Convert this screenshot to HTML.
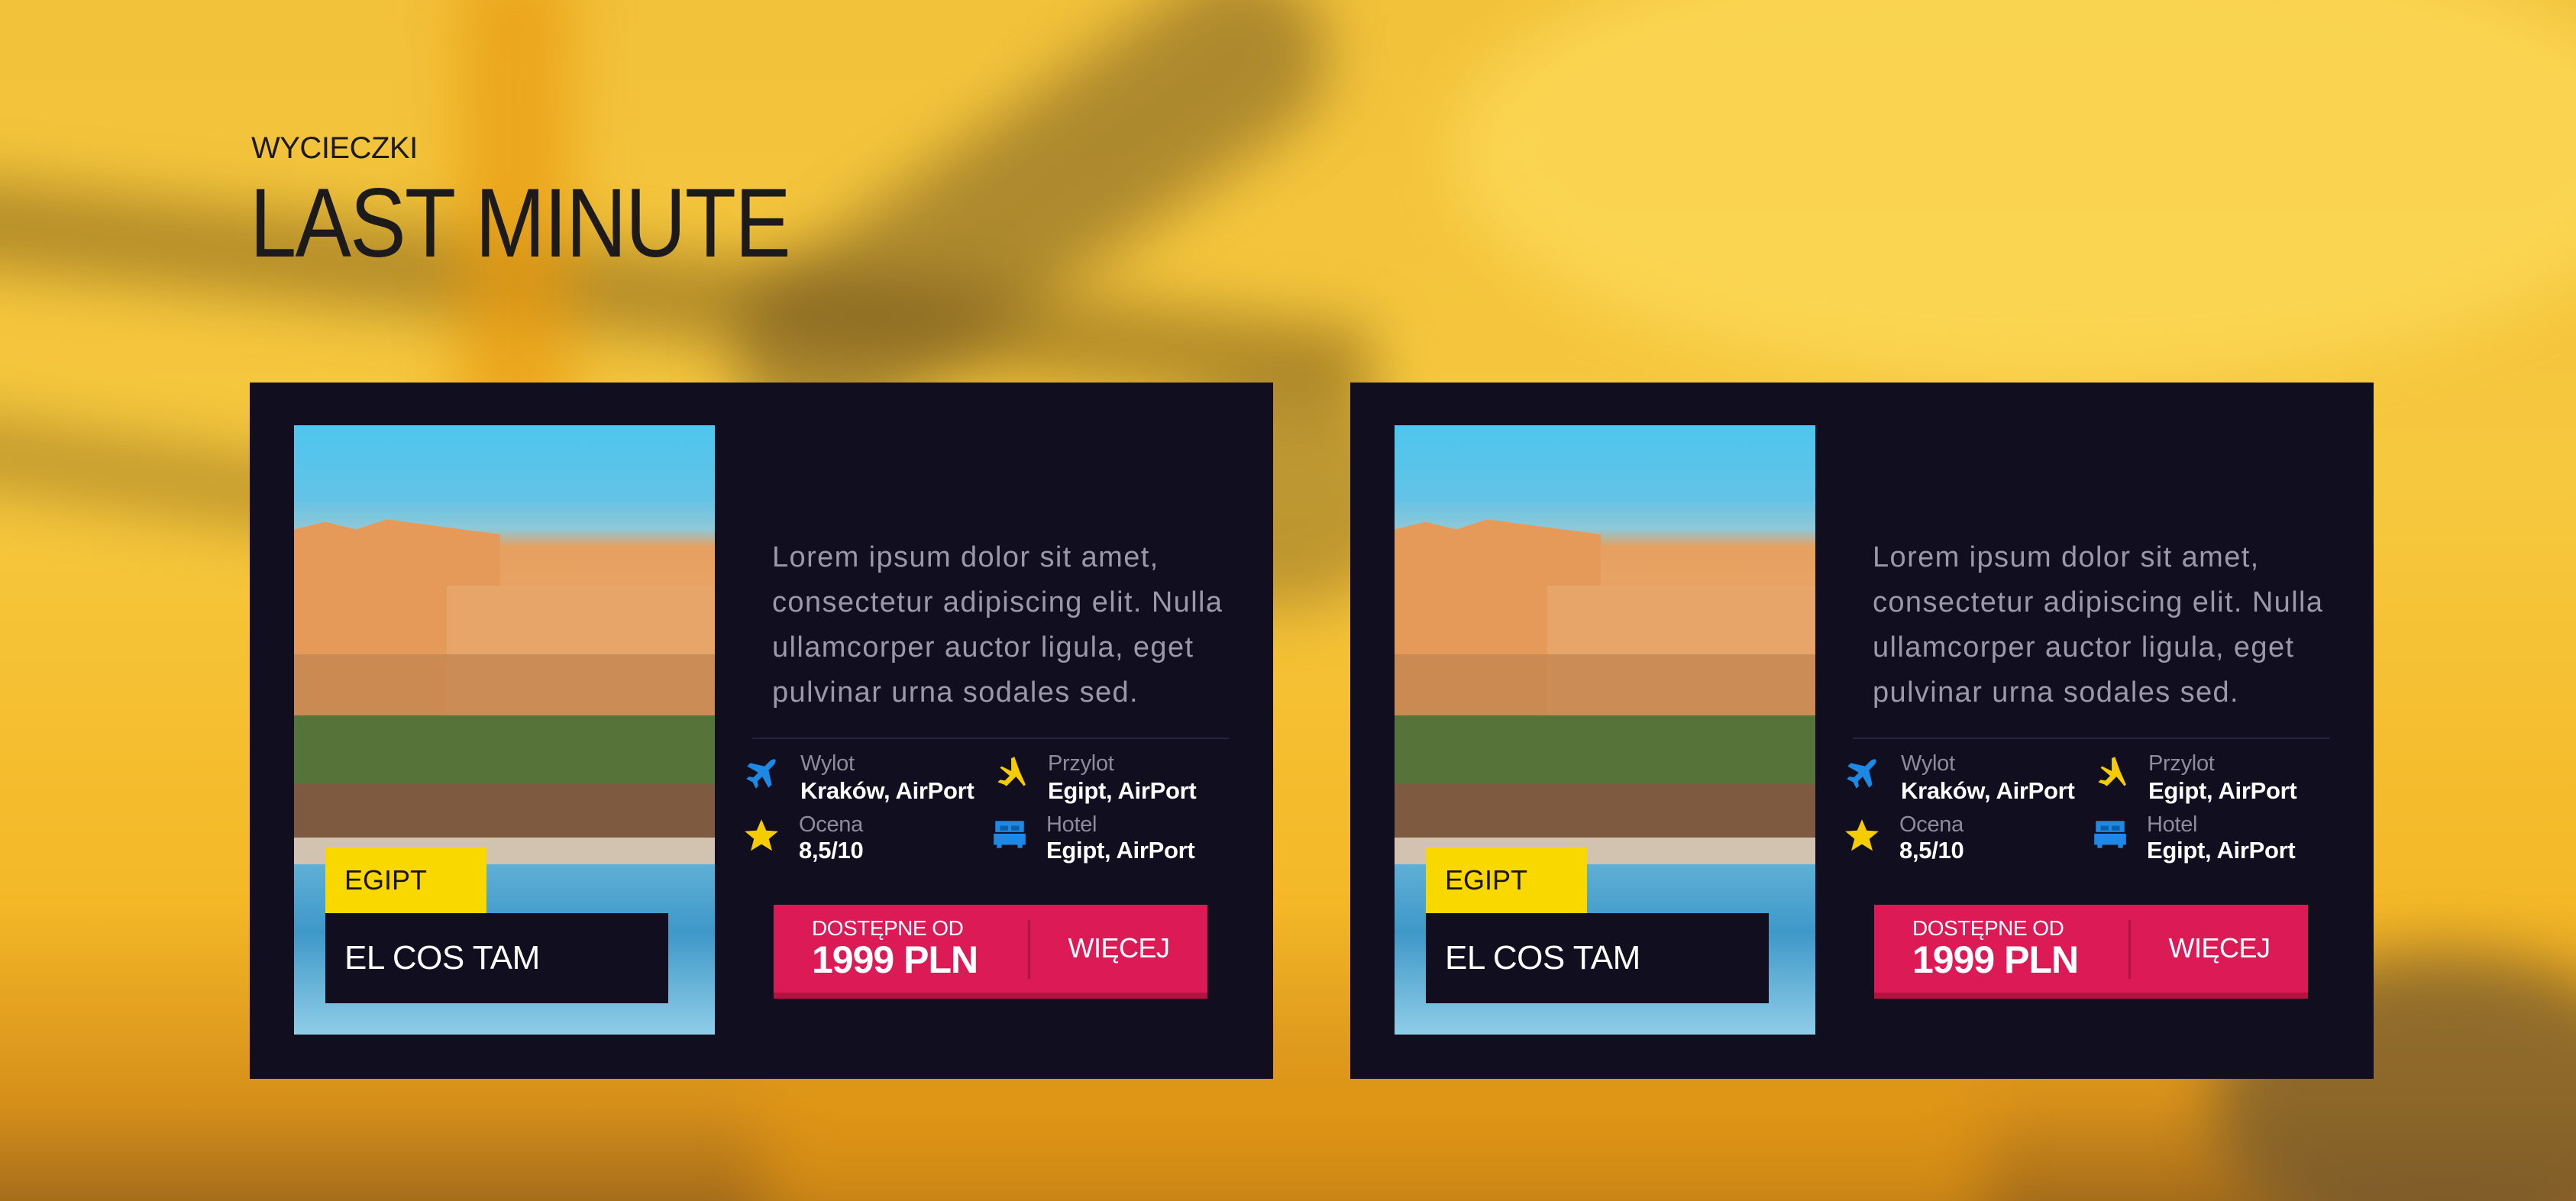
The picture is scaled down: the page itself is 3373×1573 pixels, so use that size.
<!DOCTYPE html>
<html><head><meta charset="utf-8">
<style>
*{margin:0;padding:0;box-sizing:border-box}
body{width:3373px;height:1573px;overflow:hidden;position:relative;font-family:"Liberation Sans",sans-serif;
background:linear-gradient(180deg,#f2c23a 0%,#f6c83e 40%,#f4b827 75%,#d58f1a 92%,#a66d1a 100%);}
.bg{position:absolute;inset:0;overflow:hidden}
.blob{position:absolute;filter:blur(40px)}
.card{position:absolute;top:501px;width:1340px;height:912px;background:#100e1f}
.img{position:absolute;left:58px;top:56px;width:551px;height:798px;overflow:hidden;
background:linear-gradient(180deg,#4ec6ee 0%,#62c3e6 12%,#8fc8d8 17%,#e6a060 20%,#eba66a 35%,#d0884c 45%,#8b7040 52%,#5a7a3c 58%,#8a6a48 63%,#c9b29a 68%,#b8c4c8 72%,#6ab2d2 76%,#58a8cf 85%,#7cc3e2 93%,#92d0ea 100%)}
.img i{position:absolute;display:block}
.tag{position:absolute;left:99px;top:609px;width:211px;height:86px;background:#f9d800;color:#1a1400;font-size:36px;padding-left:25px;line-height:86px}
.name{position:absolute;left:99px;top:695px;width:449px;height:118px;background:#100e1f;color:#fff;font-size:44px;padding-left:25px;line-height:118px;letter-spacing:-0.5px}
.lorem{position:absolute;left:684px;top:200px;width:700px;white-space:nowrap;color:#9b99a8;font-size:38px;line-height:59px;letter-spacing:1.4px}
.div{position:absolute;left:658px;top:465px;width:624px;height:2px;background:#26243a}
.ic{position:absolute;width:50px;height:50px}
.lab{position:absolute;color:#8e8c9a;font-size:29px;line-height:34px;letter-spacing:-0.3px}
.val{position:absolute;color:#fff;font-size:31px;font-weight:bold;line-height:36px;letter-spacing:-0.3px}
.btn{position:absolute;left:686px;top:684px;width:568px;height:123px;background:#dc1a55;border-bottom:8px solid #b5123f}
.btn .sep{position:absolute;left:333px;top:20px;width:3px;height:77px;background:#b01443}
.btn .a{position:absolute;left:50px;top:15px;color:#fff;font-size:28px;letter-spacing:-0.5px}
.btn .b{position:absolute;left:50px;top:43px;color:#fff;font-size:50px;font-weight:bold;letter-spacing:-1px}
.btn .c{position:absolute;left:336px;width:232px;top:36px;text-align:center;color:#fff;font-size:36px;letter-spacing:-0.5px}
</style></head><body>
<div class="bg">
<div class="blob" style="left:-100px;top:330px;width:1900px;height:110px;background:#7a5a18;opacity:.55;transform:rotate(6deg)"></div>
<div class="blob" style="left:-100px;top:600px;width:900px;height:90px;background:#7a5a18;opacity:.45;transform:rotate(8deg)"></div>
<div class="blob" style="left:600px;top:-50px;width:150px;height:700px;background:#e89a10;opacity:.7"></div>
<div class="blob" style="left:900px;top:150px;width:900px;height:230px;background:#6a5020;opacity:.5;transform:rotate(-35deg);border-radius:120px"></div>
<div class="blob" style="left:1500px;top:500px;width:350px;height:300px;background:#6a5020;opacity:.4;border-radius:50%"></div>
<div class="blob" style="left:1900px;top:-100px;width:1600px;height:600px;background:#ffe060;opacity:.6;border-radius:50%"></div>
<div class="blob" style="left:2900px;top:1250px;width:600px;height:400px;background:#6e5630;opacity:.7;border-radius:50%"></div>
<div class="blob" style="left:1000px;top:1420px;width:1600px;height:200px;background:#f0a010;opacity:.5"></div>
</div>

<div style="position:absolute;left:329px;top:172px;font-size:40px;color:#1c1a1a;letter-spacing:-0.5px">WYCIECZKI</div>
<div style="position:absolute;left:327px;top:228px;font-size:128px;color:#1c1a1a;transform:scaleX(0.86);transform-origin:left top;letter-spacing:-2px;line-height:130px">LAST MINUTE</div>

<div class="card" style="left:327px">
 <div class="img">
  <i style="left:0;top:110px;width:270px;height:330px;background:#e59a5a;clip-path:polygon(0 8%,15% 5%,30% 8%,45% 4%,100% 10%,100% 100%,0 100%)"></i>
  <i style="left:200px;top:210px;width:350px;height:200px;background:#e8a56a"></i>
  <i style="left:0;top:300px;width:551px;height:120px;background:#c48650;opacity:.8"></i>
  <i style="left:0;top:380px;width:551px;height:110px;background:#56743a"></i>
  <i style="left:0;top:470px;width:551px;height:80px;background:#7e5a40"></i>
  <i style="left:0;top:540px;width:551px;height:40px;background:#d2c2b0"></i>
  <i style="left:0;top:575px;width:551px;height:223px;background:linear-gradient(180deg,#5fb0d6,#3e98c8 40%,#8fcde8)"></i>
 </div>
 <div class="tag">EGIPT</div>
 <div class="name">EL COS TAM</div>
 <div class="lorem">Lorem ipsum dolor sit amet,<br>consectetur adipiscing elit. Nulla<br>ullamcorper auctor ligula, eget<br>pulvinar urna sodales sed.</div>
 <div class="div"></div>
 <svg class="ic" style="left:645px;top:488px" viewBox="0 0 24 24"><path fill="#1e88e5" d="M21 3c-1-1-3 0-4 1l-3 3-9-2-2 2 7 4-3 3-3-.5-1.5 1.5 4 2 2 4 1.5-1.5-.5-3 3-3 4 7 2-2-2-9 3-3c1-1 2-3 1-4z"/></svg>
 <div class="lab" style="left:721px;top:482px">Wylot</div>
 <div class="val" style="left:721px;top:517px">Kraków, AirPort</div>
 <svg class="ic" style="left:970px;top:488px" viewBox="0 0 24 24"><path fill="#f4cc00" d="M15 1l-2 1v8l-6-3-1 1 6 5-3 3-3-.5-1.5 1.5 4 1.5 1.5 1 6-6 5 6 1-1-4-9z"/></svg>
 <div class="lab" style="left:1045px;top:482px">Przylot</div>
 <div class="val" style="left:1045px;top:517px">Egipt, AirPort</div>
 <svg class="ic" style="left:645px;top:568px" viewBox="0 0 24 24"><path fill="#f4cc00" d="M12 2l3 7 7.5.5-5.8 4.8 2 7.5L12 17.6 5.3 21.8l2-7.5L1.5 9.5 9 9z"/></svg>
 <div class="lab" style="left:719px;top:562px">Ocena</div>
 <div class="val" style="left:719px;top:595px">8,5/10</div>
 <svg class="ic" style="left:970px;top:568px" viewBox="0 0 24 24"><path fill="#1e88e5" d="M3 3h18v7H3zM2 11h20v7h-2v2h-3v-2H7v2H4v-2H2z"/><path fill="#0d5fa8" d="M6 6h5v3H6zM13 6h5v3h-5z"/></svg>
 <div class="lab" style="left:1043px;top:562px">Hotel</div>
 <div class="val" style="left:1043px;top:595px">Egipt, AirPort</div>
 <div class="btn"><div class="sep"></div><div class="a">DOSTĘPNE OD</div><div class="b">1999 PLN</div><div class="c">WIĘCEJ</div></div>
</div>

<div class="card" style="left:1768px">
 <div class="img">
  <i style="left:0;top:110px;width:270px;height:330px;background:#e59a5a;clip-path:polygon(0 8%,15% 5%,30% 8%,45% 4%,100% 10%,100% 100%,0 100%)"></i>
  <i style="left:200px;top:210px;width:350px;height:200px;background:#e8a56a"></i>
  <i style="left:0;top:300px;width:551px;height:120px;background:#c48650;opacity:.8"></i>
  <i style="left:0;top:380px;width:551px;height:110px;background:#56743a"></i>
  <i style="left:0;top:470px;width:551px;height:80px;background:#7e5a40"></i>
  <i style="left:0;top:540px;width:551px;height:40px;background:#d2c2b0"></i>
  <i style="left:0;top:575px;width:551px;height:223px;background:linear-gradient(180deg,#5fb0d6,#3e98c8 40%,#8fcde8)"></i>
 </div>
 <div class="tag">EGIPT</div>
 <div class="name">EL COS TAM</div>
 <div class="lorem">Lorem ipsum dolor sit amet,<br>consectetur adipiscing elit. Nulla<br>ullamcorper auctor ligula, eget<br>pulvinar urna sodales sed.</div>
 <div class="div"></div>
 <svg class="ic" style="left:645px;top:488px" viewBox="0 0 24 24"><path fill="#1e88e5" d="M21 3c-1-1-3 0-4 1l-3 3-9-2-2 2 7 4-3 3-3-.5-1.5 1.5 4 2 2 4 1.5-1.5-.5-3 3-3 4 7 2-2-2-9 3-3c1-1 2-3 1-4z"/></svg>
 <div class="lab" style="left:721px;top:482px">Wylot</div>
 <div class="val" style="left:721px;top:517px">Kraków, AirPort</div>
 <svg class="ic" style="left:970px;top:488px" viewBox="0 0 24 24"><path fill="#f4cc00" d="M15 1l-2 1v8l-6-3-1 1 6 5-3 3-3-.5-1.5 1.5 4 1.5 1.5 1 6-6 5 6 1-1-4-9z"/></svg>
 <div class="lab" style="left:1045px;top:482px">Przylot</div>
 <div class="val" style="left:1045px;top:517px">Egipt, AirPort</div>
 <svg class="ic" style="left:645px;top:568px" viewBox="0 0 24 24"><path fill="#f4cc00" d="M12 2l3 7 7.5.5-5.8 4.8 2 7.5L12 17.6 5.3 21.8l2-7.5L1.5 9.5 9 9z"/></svg>
 <div class="lab" style="left:719px;top:562px">Ocena</div>
 <div class="val" style="left:719px;top:595px">8,5/10</div>
 <svg class="ic" style="left:970px;top:568px" viewBox="0 0 24 24"><path fill="#1e88e5" d="M3 3h18v7H3zM2 11h20v7h-2v2h-3v-2H7v2H4v-2H2z"/><path fill="#0d5fa8" d="M6 6h5v3H6zM13 6h5v3h-5z"/></svg>
 <div class="lab" style="left:1043px;top:562px">Hotel</div>
 <div class="val" style="left:1043px;top:595px">Egipt, AirPort</div>
 <div class="btn"><div class="sep"></div><div class="a">DOSTĘPNE OD</div><div class="b">1999 PLN</div><div class="c">WIĘCEJ</div></div>
</div>
</body></html>
